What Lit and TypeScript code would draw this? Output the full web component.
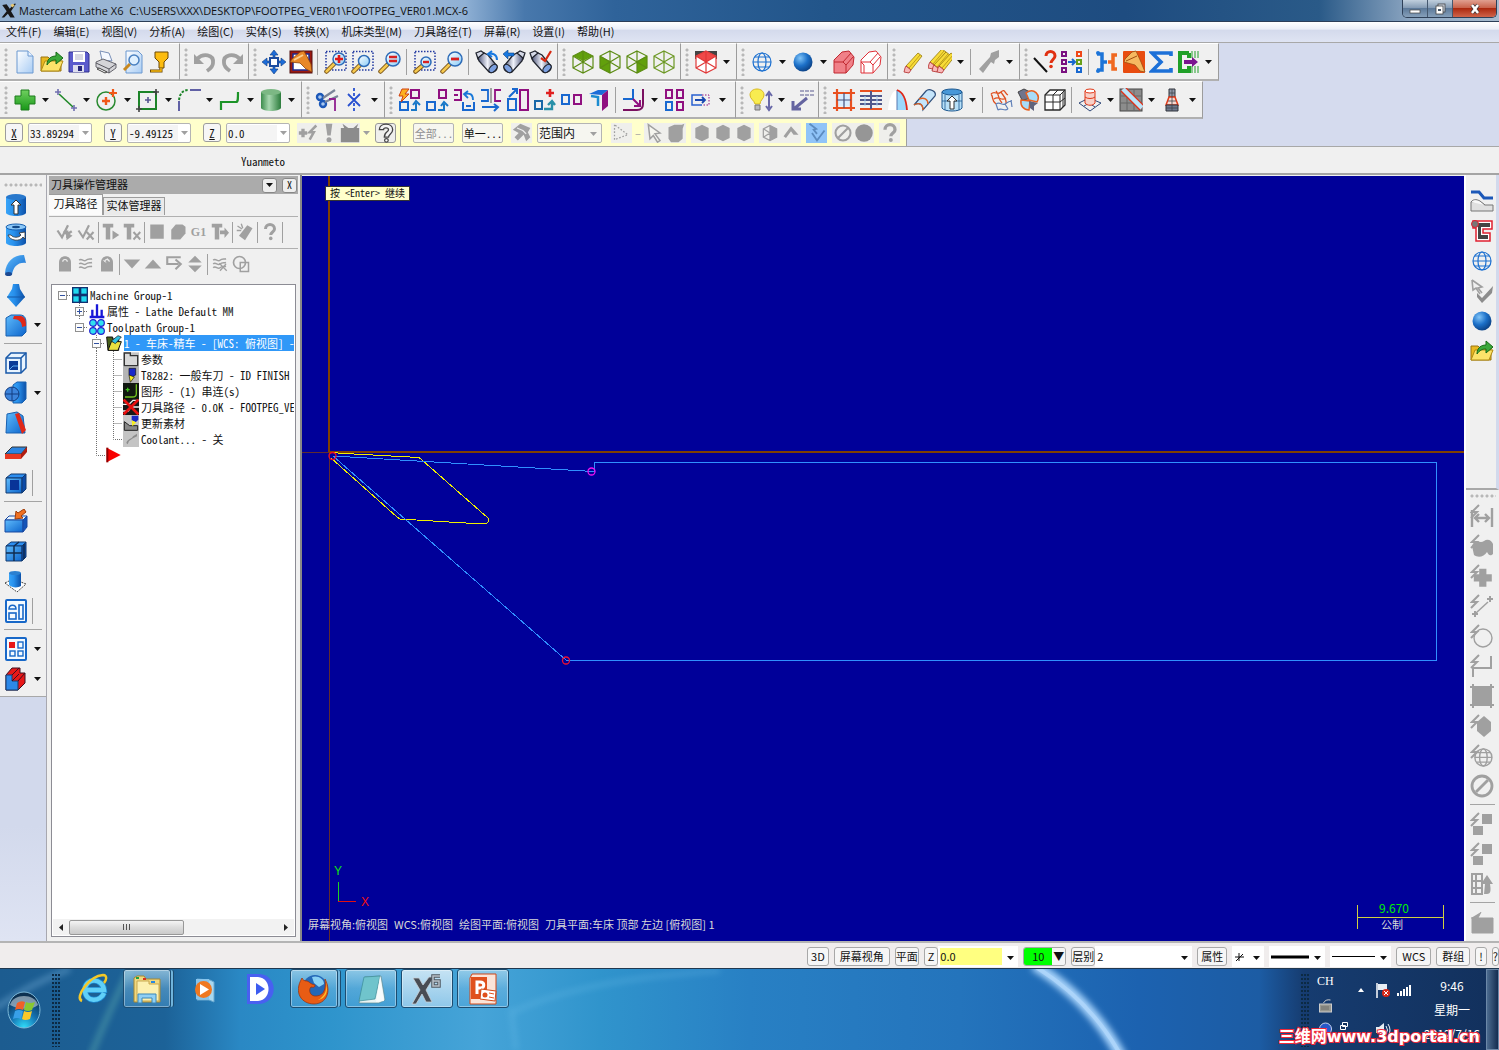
import { LitElement, html, css, svg, nothing } from "lit";
import { customElement, state } from "lit/decorators.js";
import { classMap } from "lit/directives/class-map.js";

const GREY = "#a0a0a0";

/* ---------- reusable icon parts ---------- */
const lens = (cx: number, cy: number, r: number) => svg`
  <path d="M2.500 21.500L${cx - r + 1} ${cy + r - 1}" stroke="#7a5418" stroke-width="4.500" stroke-linecap="round"/>
  <path d="M2.500 21.500L${cx - r + 1} ${cy + r - 1}" stroke="#f6c94e" stroke-width="2.500" stroke-linecap="round"/>
  <circle cx=${cx} cy=${cy} r=${r} fill="url(#gLens)" stroke="#2e6cb8" stroke-width="1.500"/>`;
const marquee = svg`<path d="M2 1.500H22V20H2z" fill="none" stroke="#2038a0" stroke-width="1.500" stroke-dasharray="1.500 1.500"/>`;
const binocular = svg`
  <path d="M1 3l5-2 3 2-2 5-4 1z" fill="#d6dae8" stroke="#20242e" stroke-width="1.300"/>
  <path d="M3 8L9 3l4 2 9 11c1 4-4 8-8 6L4 11z" fill="url(#gSteel)" stroke="#20242e" stroke-width="1.300"/>
  <ellipse cx="18" cy="18.500" rx="5" ry="3" transform="rotate(-45 18 18.500)" fill="#7ca0e0" stroke="#20242e" stroke-width="1.200"/>`;
const binocularLeft = svg`<g transform="matrix(-1 0 0 1 24 0)">${binocular}</g>`;
const cubeWire = (c: string) => svg`
  <path d="M12 1L22 6V18L12 23L2 18V6zM12 1V23M2 6L22 18M22 6L2 18" fill="none" stroke=${c} stroke-width="1.200"/>`;
const globe = (c: string, w = 1.2) => svg`
  <circle cx="12" cy="12" r="9" fill="none" stroke=${c} stroke-width=${w}/>
  <ellipse cx="12" cy="12" rx="4" ry="9" fill="none" stroke=${c} stroke-width=${w}/>
  <path d="M3 12H21M4.500 7H19.500M4.500 17H19.500" stroke=${c} stroke-width=${w}/>`;
const bolt = (c = GREY) => svg`<path d="M9 1L2 8h5L1 14" fill="none" stroke=${c} stroke-width="2"/>`;
const sq = (x: number, y: number, w: number, h: number, c: string, s = 2) =>
  svg`<rect x=${x} y=${y} width=${w} height=${h} fill="none" stroke=${c} stroke-width=${s}/>`;
const plus = (x: number, y: number, r: number, c: string, w = 1.6) =>
  svg`<path d="M${x - r} ${y}H${x + r}M${x} ${y - r}V${y + r}" stroke=${c} stroke-width=${w}/>`;
const pencil = (x: number, y: number) => svg`<g transform="translate(${x} ${y})">
  <path d="M3 15L15 2l4 3L8 19z" fill="#f8dc38" stroke="#94780c" stroke-width=".8"/><path d="M6 17L17 4" stroke="#b09010" stroke-width=".8"/>
  <path d="M3 15l5 4-2 3-5-1 1-4z" fill="#f8b8b8" stroke="#b02828" stroke-width=".8"/></g>`;
const blueBox = svg`<path d="M2 7l5-4h15l-4 4z" fill="#2d8ef0" stroke="#123a70"/><path d="M2 7H18V22H2z" fill="url(#gBlue)" stroke="#123a70"/><path d="M18 7l4-4V18l-4 4z" fill="#0b4aa8" stroke="#123a70"/>`;
const hexG = svg`<path d="M12 2L20 6V18L12 22L4 18V6z" fill=${GREY}/>`;
const folderArrow = svg`
  <path d="M1 7h7l2 2h11v12H1z" fill="#e8b820" stroke="#9a7410"/><path d="M1 21l4-10h18l-4 10z" fill="#fce36a" stroke="#b08a14"/>
  <path d="M7 15c0-7 5-9 9-9V2l7 6-7 6v-4c-4 0-6 1-9 5z" fill="#3aa83a" stroke="#176a17"/>`;
const cross = svg`<path d="M8 2h8v6h6v8h-6v6H8v-6H2V8h6z"/>`;
const ques = (c: string) => svg`<path d="M6 8c0-8 12-8 12 0 0 4-5 4-5 8" fill="none" stroke=${c} stroke-width="4"/><circle cx="13" cy="20.500" r="2.400" fill=${c}/>`;
const wavy = svg`<path d="M3 7c3-4 6 3 9 0s6-1 8-2M3 12c3-4 6 3 9 0s6-1 8-2M3 17c3-4 6 3 9 0s6-1 8-2" fill="none" stroke=${GREY} stroke-width="2"/>`;
const lock = svg`<path d="M4 10c0-11 16-11 16 0v12H4z" fill=${GREY}/><path d="M9 9c0-4 6-4 6 0" fill="none" stroke="#f0f0f0" stroke-width="1.500"/>`;

/* ---------- icon table, 24 x 24 grid ---------- */
const ICONS: Record<string, unknown> = {
  new: svg`<path d="M4 1H15L20 6V23H4z" fill="url(#gPaper)" stroke="#6a98d0"/><path d="M15 1V6H20" fill="#e8f2ff" stroke="#6a98d0"/>`,
  open: folderArrow,
  save: svg`<path d="M2 2H20L22 4V22H2z" fill="#5a5acc" stroke="#30308c"/><rect x="6" y="2" width="12" height="10" fill="#fff"/><path d="M8 5h8M8 7h8M8 9h8" stroke="#b0b0c8"/><rect x="6" y="15" width="11" height="7" fill="#dde"/><rect x="11" y="16" width="4" height="5" fill="#26267c"/>`,
  print: svg`<path d="M6 1l9 2 3 8-10-1z" fill="#f4f8ff" stroke="#7a90b8"/><path d="M2 12l7-3 13 5v4l-7 5L2 17z" fill="#d4d4d8" stroke="#66666e"/><path d="M2 13l13 6 7-5M15 19v4" fill="none" stroke="#55555d"/><path d="M5 18l8 4-2 1-8-4z" fill="#fff" stroke="#444"/>`,
  preview: svg`<path d="M5 1H17L21 5V23H5z" fill="url(#gPaper)" stroke="#6a98d0"/><path d="M3 20l6-6" stroke="#c88820" stroke-width="3"/><circle cx="13" cy="10" r="5" fill="#dff0ff" stroke="#4a80c0" stroke-width="1.500"/>`,
  verify: svg`<path d="M7 2H20V8L16 12V18H11V12L7 8z" fill="#fcbc10" stroke="#6a4808"/><path d="M13 18v3H2" fill="none" stroke="#6a4808" stroke-width="3"/><path d="M13 18v3H3" fill="none" stroke="#fcbc10" stroke-width="1.500"/>`,
  undo: svg`<path d="M4 9C10 3 21 4 20 13c0 4-3 6-6 8" fill="none" stroke=${GREY} stroke-width="3.800"/><path d="M1 4v10h10z" fill=${GREY}/>`,
  redo: svg`<path d="M20 9C14 3 3 4 4 13c0 4 3 6 6 8" fill="none" stroke=${GREY} stroke-width="3.800"/><path d="M23 4v10H13z" fill=${GREY}/>`,
  fit: svg`<path d="M12 0l4 5h-3v3h-2V5H8zM12 24l4-5h-3v-3h-2v3H8zM0 12l5-4v3h3v2H5v3zM24 12l-5-4v3h-3v2h3v3z" fill="#1c6cd8" stroke="#123c80" stroke-width=".6"/><rect x="8" y="8" width="8" height="8" fill="#fff" stroke="#1c4ca0" stroke-width="2"/>`,
  repaint: svg`<rect x="1" y="1" width="22" height="22" fill="#9c1810" stroke="#501010"/><rect x="4" y="4" width="16" height="16" fill="#fff" stroke="#1a2a90" stroke-width="1.500"/><path d="M11 2l4-1 7 13 1 8-6-3-6-6-10-1 2-3z" fill="#e88828" stroke="#8a4008" stroke-width=".8"/><path d="M5 10l9-5" stroke="#fcd090" stroke-width="2"/>`,
  zoomWin: svg`${marquee}${lens(15, 9, 6)}${plus(15, 9, 4, "#e01818", 2.6)}`,
  zoomTarget: svg`${marquee}${lens(13, 11, 5.5)}`,
  zoomEq: svg`${lens(15, 9, 7)}<path d="M11 7h8M11 11h8" stroke="#d82020" stroke-width="2.400"/>`,
  unzoomWin: svg`${marquee}${lens(13, 12, 5)}<path d="M10 12h6" stroke="#d82020" stroke-width="2.400"/>`,
  unzoom: svg`${lens(15, 9, 7)}<path d="M11 9h8" stroke="#d82020" stroke-width="2.800"/>`,
  binoA: svg`${binocular}<path d="M22 10C22 4 17 3 14 4M17 1l-4 3 4 3" fill="none" stroke="#1878e0" stroke-width="2"/>`,
  binoB: svg`${binocularLeft}<path d="M1 4l5-4v3h6v3H6v3z" fill="#1878e0" stroke="#0c4080" stroke-width=".6"/>`,
  binoC: svg`${binocular}<path d="M12 8l4 3 6-10" fill="none" stroke="#d82810" stroke-width="2.200"/>`,
  cubeTop: svg`<path d="M12 1L22 6L12 11L2 6z" fill="#62a00c"/>${cubeWire("#5c8c14")}`,
  cubeFront: svg`<path d="M2 6L12 11V23L2 18z" fill="#62a00c"/>${cubeWire("#5c8c14")}`,
  cubeSide: svg`<path d="M22 6L12 11V23L22 18z" fill="#62a00c"/>${cubeWire("#5c8c14")}`,
  cubeIso: cubeWire("#6c9824"),
  cubeRed: svg`<path d="M1 1h22v8H1z" fill="#444"/><path d="M12 1L22 6V18L12 23L2 18V6z" fill="#fff"/><path d="M12 1L22 6L12 12L2 6z" fill="#f04848"/>${cubeWire("#e03838")}`,
  globe: globe("#1c70d0"),
  ball: svg`<circle cx="12" cy="12" r="9.500" fill="url(#gBall)"/>`,
  solidPink: svg`<path d="M2 10l8-8 7-1 5 6-1 8-7 8H2z" fill="#f08088" stroke="#c02830"/><path d="M2 12h9l3 3v8M11 12l8-9M14 15l7-8" fill="none" stroke="#c02830"/>`,
  solidWire: svg`<path d="M2 10l8-8 7-1 5 6-1 8-7 8H2z" fill="#fff" stroke="#e03038"/><path d="M2 12h9l3 3v8M11 12l8-9M14 15l7-8M2 12l3 3v8" fill="none" stroke="#e03038"/>`,
  pencil: pencil(2, 1),
  pencils: svg`${pencil(-1, -3)}${pencil(3, 0)}${pencil(8, 1)}`,
  hammer: svg`<path d="M2 19L13 7l1-4 8-3v7l-4 3-1 4-3-2L6 23z" fill=${GREY}/>`,
  analyze: svg`<path d="M1 8L14 22" stroke="#111" stroke-width="2"/><path d="M13 6c0-6 9-6 9 0 0 3-4 4-4 7" fill="none" stroke="#e03010" stroke-width="3"/><circle cx="18" cy="16.500" r="1.800" fill="#e03010"/>`,
  grids: svg`${sq(2, 2, 4, 4, "#7a1080")}${sq(2, 10, 4, 4, "#7a1080")}${sq(2, 18, 4, 4, "#7a1080")}${sq(17, 2, 4, 4, "#f04818")}${sq(17, 10, 4, 4, "#68a018")}${sq(17, 18, 4, 4, "#1868d0")}<path d="M8 12h6M12 9l3 3-3 3" fill="none" stroke="#1868d0" stroke-width="2"/>`,
  link: svg`<path d="M2 4h5v16H2M7 12h5" fill="none" stroke="#1c74d8" stroke-width="3.500"/><circle cx="3" cy="3" r="2" fill="#1c74d8"/><circle cx="3" cy="21" r="2" fill="#1c74d8"/><path d="M22 5h-4v14h4M18 12h-5" fill="none" stroke="#f06820" stroke-width="3.500"/>`,
  brush: svg`<rect x="1" y="1" width="22" height="22" rx="1" fill="#e84c10"/><path d="M10 2l4-1 5 11 4 10-5-1-5-6-11-3 1-3z" fill="#f6b860" stroke="#a04c10" stroke-width=".8"/><path d="M4 11l11-5" stroke="#a04c10"/>`,
  sigma: svg`<path d="M22 6V3H3L12 12L3 21H22V18" fill="none" stroke="#1c70d8" stroke-width="3.600"/>`,
  outC: svg`<path d="M13 3H4V21H13V16" fill="none" stroke="#20a028" stroke-width="4"/><path d="M13 3v5" stroke="#20a028" stroke-width="4"/><path d="M16 1v7M19 1v7M22 1v7M16 16v7M19 16v7M22 16v7" stroke="#20a028"/><path d="M8 10h8V7l6 5-6 5v-3H8z" fill="#7a1490"/>`,

  point: svg`<g fill="url(#gGreen)" stroke="#1c7c1c">${cross}</g>`,
  line: svg`<path d="M5 6L19 19" stroke="#208828" stroke-width="1.600"/>${plus(4, 4, 3, "#7070b0")}${plus(20, 20, 3, "#7070b0")}`,
  circle: svg`<circle cx="11" cy="13" r="9" fill="none" stroke="#2a8a30" stroke-width="1.500"/>${plus(11, 13, 4, "#f05818", 2.4)}${plus(18, 5, 4, "#f05818", 2.2)}`,
  rect: svg`${sq(3, 4, 17, 17, "#1c8428", 2)}${plus(12, 12, 3, "#555590")}${plus(20, 4, 3, "#444")}${plus(3, 21, 3, "#444")}`,
  fillet: svg`<path d="M2 23V13" stroke="#30308c" stroke-width="1.500"/><path d="M2 12C3 5 6 2 12 2" fill="none" stroke="#1c8428" stroke-width="2" stroke-dasharray="2.500 1.500"/><path d="M13 2h11" stroke="#30308c" stroke-width="1.500"/>`,
  spline: svg`<path d="M3 22V14H18C20 14 20 12 20 4" fill="none" stroke="#1c9428" stroke-width="2.200"/>`,
  cylinder: svg`<path d="M2 4V20C4 24 20 24 22 20V4z" fill="url(#gCyl)"/><ellipse cx="12" cy="4" rx="10" ry="3" fill="#7cb884"/>`,
  trim: svg`<circle cx="5" cy="9" r="3" fill="#a8c8f0" stroke="#1c58b8" stroke-width="2.400"/><circle cx="8" cy="16" r="3" fill="#a8c8f0" stroke="#1c58b8" stroke-width="2.400"/><path d="M8 10L20 2M10 14l13-6" stroke="#7a8498" stroke-width="2.200"/><path d="M14 11h6v12" fill="none" stroke="#902090" stroke-width="1.800"/>`,
  breakX: svg`<path d="M12 0V24" stroke="#2850d0" stroke-width="1.800" stroke-dasharray="3 2"/><path d="M6 6L18 18M18 6L6 18" stroke="#2850d0" stroke-width="1.800"/>`,
  tDyn: svg`${sq(13, 2, 8, 8, "#901080")}${sq(2, 14, 8, 8, "#1868d0")}<path d="M4 1h7l-4 5h4L3 14l2-6H1z" fill="#fcb020" stroke="#d04010"/><path d="M13 22h5v-7M15 17l3-4 4 4" fill="none" stroke="#1878c8" stroke-width="2"/>`,
  tMove: svg`${sq(14, 2, 7, 8, "#901080")}${sq(2, 14, 8, 8, "#1868d0")}<path d="M13 22h6v-6M16 18l3-4 4 4" fill="none" stroke="#1878c8" stroke-width="2"/>`,
  tRot: svg`<path d="M2 2h7v10H2M2 7h4" fill="none" stroke="#901080" stroke-width="2"/><path d="M21 12C21 6 18 5 13 6M16 3l-4 3 4 4" fill="none" stroke="#1878d8" stroke-width="1.800"/><path d="M11 14v8h11v-8M14 18h5" fill="none" stroke="#1868d0" stroke-width="2"/>`,
  tMir: svg`<path d="M2 2h7v11H2" fill="none" stroke="#1868d0" stroke-width="1.800"/><path d="M12 0v15" stroke="#555"/><path d="M22 2h-6v11h6" fill="none" stroke="#901080" stroke-width="1.800"/><path d="M3 19h16M15 16l4 3-4 4" fill="none" stroke="#1868d0" stroke-width="2"/>`,
  tScale: svg`${sq(2, 11, 8, 11, "#1868d0")}${sq(14, 2, 8, 20, "#901080")}<path d="M3 9l7-7M6 1h5v5" fill="none" stroke="#1868d0" stroke-width="2"/>`,
  tOff: svg`${sq(2, 13, 7, 8, "#1868a8")}${plus(17, 5, 4, "#e02020", 2.6)}<path d="M11 21h8v-6M15 17l4-4 3 4" fill="none" stroke="#2890a8" stroke-width="2.400"/>`,
  tProj: svg`${sq(2, 7, 7, 9, "#1868d0")}${sq(14, 7, 7, 9, "#901080")}`,
  tDrag: svg`<path d="M2 6l9-4h10l-6 5z" fill="#1c6cd8"/><path d="M21 2v16l-6 5V7z" fill="#901080"/><path d="M4 8l7 1v9" fill="none" stroke="#1c8cd0" stroke-width="2.500"/>`,
  tStretch: svg`<path d="M1 11h10V1" fill="none" stroke="#1868d0" stroke-width="2"/><path d="M1 22h14c4 0 6-2 6-6V1" fill="none" stroke="#7a1060" stroke-width="2"/><path d="M11 11l7 7M18 12v6h-6" fill="none" stroke="#901080" stroke-width="2"/>`,
  tArray: svg`${sq(3, 2, 6, 8, "#901080")}${sq(14, 2, 6, 8, "#901080")}${sq(3, 14, 6, 8, "#1868d0")}${sq(14, 14, 6, 8, "#901080")}`,
  tBox: svg`<path d="M12 7H2V17H12" fill="none" stroke="#2860d0" stroke-width="1.500"/><path d="M12 7h7v10h-7" fill="none" stroke="#901080" stroke-dasharray="1.500 1.500"/><path d="M5 12h10M12 9l3 3-3 3" fill="none" stroke="#1848b0" stroke-width="1.800"/>`,
  bulb: svg`<path d="M6 16C5 12 1 11 1 7c0-8 14-8 14 0 0 4-4 5-4 9z" fill="#f8ec50" stroke="#d8b820"/><path d="M6 17h5v5H6z" fill="#b8b8c0" stroke="#777"/><path d="M20 6v14M17 8l3-4 3 4M17 18l3 4 3-4" fill="none" stroke="#6868a8" stroke-width="2"/>`,
  dims: svg`<path d="M10 3h14M10 7h14" stroke="#5a5a90" stroke-dasharray="4 1"/><path d="M17 10L5 20M3 13v8h8" fill="none" stroke="#6464a0" stroke-width="3"/>`,
  frame: svg`<path d="M5 6h14v12H5z" fill="#d8ecff"/><path d="M5 1v22M19 1v22M1 5h22M1 20h22" stroke="#e85020" stroke-width="2.200"/><path d="M12 5v15M5 12h14" stroke="#44507c" stroke-width="1.200"/>`,
  hatch: svg`<path d="M1 3h22M1 21h22" stroke="#e85020" stroke-width="2.200"/><path d="M1 8h22M1 12h22M1 16h22M12 3v18" stroke="#50588c" stroke-width="2"/><path d="M6 8v10M18 8v10" stroke="#a8d0f0"/>`,
  arch: svg`<path d="M2 22C3 10 6 3 11 2V22z" fill="#fff"/><path d="M11 2c6 2 9 8 10 20H11z" fill="#9cd8fc"/><path d="M11 2v20" stroke="#5878b0"/><path d="M11 2c6 2 9 8 10 20" fill="none" stroke="#e02818" stroke-width="1.800"/>`,
  tube: svg`<path d="M1 17L13 3c3-3 11 0 9 5L10 22C10 16 6 14 1 17z" fill="#c4e4fa" stroke="#30507c" stroke-width="1.200"/><path d="M1 17c5-3 9-1 9 5M6 11c5-2 9 0 9 5" fill="none" stroke="#e06020" stroke-width="1.400"/>`,
  cylUp: svg`<path d="M2 4V20C4 24 20 24 22 20V4z" fill="#b8e0f8" stroke="#1c5890"/><ellipse cx="12" cy="4" rx="10" ry="3" fill="#4898d8" stroke="#1c5890"/><path d="M5 7v15M19 7v15M2 13h20" stroke="#1c5890" stroke-width=".8"/><path d="M10 21v-8H7l5-5 5 5h-3v8z" fill="#fff" stroke="#333"/>`,
  surfA: svg`<path d="M2 6c4-4 6 2 10-2s4 2 7 3M2 6c3 4 0 6 5 10M12 4c2 4 6 6 5 12M5 11c5-4 7 3 12-1M7 3c4 5 1 6 6 12" fill="none" stroke="#e05020" stroke-width="1.300"/><path d="M7 16c4-3 6 2 9 0s4-3 7-3M9 22c4-3 6 2 10-1M7 16l2 6M16 16l3 5M22 12l1 7" fill="none" stroke="#6080b8" stroke-width="1.200"/>`,
  surfB: svg`<path d="M2 4l6-3 6 3-2 7-6 1z" fill="#70748c" stroke="#444"/><path d="M10 5c8-6 15 2 11 9l-8-2z" fill="#a8dcf8" stroke="#e86020" stroke-width="1.500"/><path d="M5 12c-1 6 3 10 8 10l1-9z" fill="#a8dcf8" stroke="#e86020" stroke-width="1.500"/><path d="M13 13l9 2-4 3v5l-4-3z" fill="#60647c"/>`,
  boxGrid: svg`<path d="M2 7l5-5h15v15l-5 5H2z" fill="#fff" stroke="#282828" stroke-width="1.300"/><path d="M2 7h15v15M17 7l5-5M10 7v15M2 14h15l5-4M10 7l5-5M20 4v15" fill="none" stroke="#282828"/>`,
  sphereNet: svg`<path d="M1 15l10-5 12 5-11 8z" fill="none" stroke="#304878"/><path d="M6 18l11-6M6 12l11 7" stroke="#304878"/><path d="M7 3V15C9 18 15 18 17 15V3" fill="#f8d0c8" stroke="#e03818"/><ellipse cx="12" cy="3" rx="5" ry="2" fill="#fff" stroke="#e03818"/><path d="M7 9c2 2 8 2 10 0" fill="none" stroke="#e03818"/>`,
  plate: svg`<rect x="1" y="1" width="22" height="22" fill="#8c8c8c" stroke="#444"/><path d="M8 1v22M15 1v22M1 8h22M1 15h22" stroke="#666"/><path d="M4 1l19 19" stroke="#e03018" stroke-width="7"/><path d="M4 1l19 19" stroke="#bce4f8" stroke-width="4.500"/>`,
  tower: svg`<path d="M9 1h6v8H9z" fill="#9098a8" stroke="#30343c"/><path d="M9 9h6l3 8H6z" fill="#f8d8d0" stroke="#e03818" stroke-width="1.500"/><path d="M6 17h12v6H6z" fill="#70788c" stroke="#30343c"/><path d="M12 1v22M9 5h6M6 20h12M8 13h8" stroke="#40444c" stroke-width=".8"/>`,

  gPlusBolt: svg`${plus(6, 12, 5, GREY, 4)}<path d="M22 3L14 11h5l-5 9" fill="none" stroke=${GREY} stroke-width="3"/>`,
  gBang: svg`<path d="M8 1h8l-2 14h-4z" fill=${GREY}/><circle cx="12" cy="20" r="3" fill=${GREY}/>`,
  gPot: svg`<path d="M1 6h4L3 1l7 5h6l6-5-2 5h3v17H1z" fill="#8c8c8c"/>`,
  help: svg`<path d="M4 8c0-9 16-9 16 0 0 5-5 5-5 9h-5c0-7 5-6 5-9 0-3-6-3-6 0z" fill="#f4f4f4" stroke="#444" stroke-width="1.600"/><circle cx="12.500" cy="20.800" r="2.200" fill="#fff" stroke="#444" stroke-width="1.500"/>`,
  gHelp: ques(GREY),
  gSurf: svg`<path d="M1 8l9-7 12 5-3 5 3 6-5 5-3-8-7 7-4-4 5-5z" fill=${GREY}/><path d="M6 6l7 3M13 9l4 4" stroke="#eee" stroke-width="1.500"/>`,
  gTri: svg`<path d="M3 2v18l16-6z" fill="none" stroke=${GREY} stroke-width="1.500" stroke-dasharray="2 2"/>`,
  gCursor: svg`<path d="M4 2l14 10-6 1 6 8-3 2-5-8-4 4z" fill="#f6f6f0" stroke=${GREY} stroke-width="1.800"/>`,
  gHexA: svg`<path d="M3 5l7-3h9l3-1-2 6v12l-5 4H6l-3-4z" fill=${GREY}/>`,
  gHex: hexG,
  gHalf: svg`<path d="M12 3L20 7V17L12 21L4 17V7zM12 3V21M4 7l8 5M4 17l8-5" fill="none" stroke=${GREY} stroke-width="1.500"/><path d="M12 3L20 7V17L12 21z" fill=${GREY}/>`,
  gUp: svg`<path d="M3 16L12 4L21 14H15L12 10L6 18z" fill=${GREY}/>`,
  gPick: svg`<path d="M3 1l8 6-3 1 4 5M6 12l6 9 9-12" fill="none" stroke="#5c8cc0" stroke-width="2.200"/>`,
  gNo: svg`<circle cx="12" cy="12" r="9" fill="none" stroke=${GREY} stroke-width="2.500"/><path d="M6 18L18 6" stroke=${GREY} stroke-width="2.500"/>`,
  gDisc: svg`<circle cx="12" cy="12" r="10.500" fill="#969696"/>`,

  vCylUp: svg`<path d="M2 4V20C4 24 20 24 22 20V4z" fill="url(#gBlueH)"/><ellipse cx="12" cy="4" rx="10" ry="3" fill="#2878cc"/><path d="M10 21v-9H7l5-5 5 5h-3v9z" fill="#fff" stroke="#333"/>`,
  vRev: svg`<path d="M2 4V20C4 24 20 24 22 20V4z" fill="url(#gBlueH)"/><ellipse cx="12" cy="4" rx="10" ry="3" fill="#8cc8f8" stroke="#1860b0"/><ellipse cx="12" cy="4" rx="4" ry="1.200" fill="#124888"/><path d="M4 12c2 6 12 7 15 2l2 2v-7l-6 1 2 2c-2 3-8 3-10 0z" fill="#fff" stroke="#333" stroke-width=".8"/>`,
  vSweep: svg`<path d="M1 20C2 9 9 2 20 2l2 8C14 9 9 14 8 22z" fill="url(#gBlue)"/><ellipse cx="4.500" cy="21" rx="3.500" ry="2" fill="#1c4890"/>`,
  vLoft: svg`<path d="M9 1h6l1 5 5 8-9 10-9-10 5-8z" fill="url(#gBlueH)"/><path d="M3 14h18" stroke="#1458a8"/>`,
  vFillet: svg`<path d="M2 5l5-3h9c5 0 6 4 6 8v9l-4 4H2z" fill="url(#gBlue)" stroke="#1860b0"/><path d="M10 3h7c4 1 5 4 5 10l-4 1c0-5-3-8-9-8z" fill="#e02818"/>`,
  vShell: svg`<path d="M2 7l5-5h15v15l-5 5H2z" fill="#e8f4ff" stroke="#1858a8" stroke-width="1.500"/><path d="M2 7h15v15M17 7l5-5" fill="none" stroke="#1858a8" stroke-width="1.500"/><rect x="5" y="10" width="9" height="9" fill="#0c3c98"/><path d="M5 19l4-4h5" stroke="#58a8f0" fill="none"/>`,
  vBool: svg`<path d="M9 4l4-3h9v17l-4 4H9z" fill="url(#gBlueH)" stroke="#1860b0"/><circle cx="8" cy="13" r="7" fill="#3c84dc" stroke="#123c80"/><path d="M8 6v14M1 13h14" stroke="#123c80"/>`,
  vDraft: svg`<path d="M3 3l10-2 6 4 2 17H2z" fill="url(#gBlue)" stroke="#1860b0"/><path d="M11 3l4-1 7 17-4 4z" fill="#e02818"/>`,
  vThick: svg`<path d="M1 13L8 6h15l-6 7z" fill="#2c84e0" stroke="#333"/><path d="M1 13h16v5H1z" fill="#e83820"/><path d="M17 13l6-7v5l-6 7z" fill="#b01c10"/>`,
  vBlock: svg`${blueBox}<rect x="6" y="9" width="9" height="10" fill="#083498"/>`,
  vImport: svg`<path d="M1 11l4-4h18l-4 4z" fill="#e8f4ff" stroke="#1848a0"/><path d="M1 11h18v12H1z" fill="url(#gBlue)" stroke="#1848a0"/><path d="M19 11l4-4v11l-4 5z" fill="#1454b8" stroke="#1848a0"/><path d="M20 0l2 3-5 4 2 2-8 1 1-8 2 2z" fill="#f07020" stroke="#a03c08"/>`,
  vQuad: svg`${blueBox}<path d="M10 7v15M2 14h16M10 7l5-4M20 5v15" stroke="#102c50" stroke-width="1.500"/>`,
  vLay: svg`<path d="M1 14l8-4 13 5-9 8z" fill="#fff" stroke="#444" stroke-dasharray="2 1"/><path d="M5 4v12c3 3 9 3 12 1V4z" fill="url(#gBlueH)"/><ellipse cx="11" cy="4" rx="6" ry="2" fill="#2c80d0"/>`,
  vDraw: svg`<rect x="2" y="1" width="20" height="22" rx="1" fill="#f4faff" stroke="#1868c8" stroke-width="2"/>${sq(5, 14, 7, 6, "#1868c8", 1.6)}${sq(15, 6, 4, 14, "#1868c8", 1.6)}<path d="M5 10c0-5 7-5 7 0z" fill="none" stroke="#1868c8" stroke-width="1.500"/>`,
  vGrid: svg`<rect x="2" y="1" width="20" height="22" rx="1" fill="#f4faff" stroke="#1868c8" stroke-width="2"/><rect x="5" y="5" width="6" height="6" fill="#e81818"/>${sq(14, 5, 5, 6, "#1868c8", 1.4)}${sq(6, 14, 5, 5, "#1868c8", 1.4)}${sq(14, 14, 5, 5, "#1868c8", 1.4)}`,
  vStep: svg`<path d="M2 8l6-7h8v5h5v10l-7 7H2z" fill="#e81818" stroke="#3c1020"/><path d="M2 8h6v6h6v9H2z" fill="#2c88e8" stroke="#123c70"/><path d="M8 8l7-7M8 14l7-7M14 14l7-8" stroke="#3c1020"/>`,

  rLathe: svg`<path d="M1 3h8l5 6h9" fill="none" stroke="#1c58b8" stroke-width="3"/><path d="M1 13l8-1 6 4h8v6H1z" fill="#e0e0e0" stroke="#777"/><path d="M1 13c3-4 7-2 9-1l5 4" fill="#f8f8f8" stroke="#777"/>`,
  rProf: svg`<path d="M3 2h19v8H13v4h7v8H6V9H3z" fill="#fff" stroke="#e02030" stroke-width="1.500"/><path d="M6 4h14v4H11v8h7v4H8V7H6z" fill="#444"/><circle cx="5" cy="5" r="3.500" fill="#777" stroke="#e02030"/>`,
  rCheck: svg`<path d="M2 1l10 7-4 1 4 5M2 1l1 10 3-2 4 6" fill="none" stroke=${GREY} stroke-width="1.600"/><path d="M7 14l5 5L23 7l-1 7-10 10-5-6z" fill="#8c8c8c"/>`,
  qDim: svg`${bolt()}<path d="M2 6v17M22 4v19M5 14h14M9 10l-4 4 4 4M15 10l4 4-4 4" fill="none" stroke=${GREY} stroke-width="2.400"/>`,
  qSurf: svg`${bolt()}<path d="M2 12c3-8 8-2 12-5s8 0 9 3v10c-3 3-5 0-6-2-3 5-9 6-13 3z" fill=${GREY}/>`,
  qPoint: svg`${bolt()}<g transform="translate(2 3) scale(.9)" fill=${GREY}>${cross}</g>`,
  qLine: svg`${bolt()}<path d="M6 19L18 8" stroke=${GREY} stroke-width="1.500"/>${plus(20, 5, 3, GREY, 2)}${plus(5, 20, 3, GREY, 2)}`,
  qCirc: svg`${bolt()}<circle cx="13" cy="14" r="9" fill="none" stroke=${GREY} stroke-width="1.400"/>`,
  qStep: svg`${bolt()}<path d="M3 23V14H21V2" fill="none" stroke=${GREY} stroke-width="2"/>`,
  qRect: svg`<path d="M3 3h18v18H3z" fill=${GREY}/><path d="M0 3h24M0 21h24M3 0v24M21 0v24" stroke=${GREY} stroke-width="2"/>`,
  qHex: svg`${bolt()}<path d="M14 2l7 6v9l-7 6-7-6V8z" fill=${GREY}/>`,
  qGlobe: svg`${bolt()}<g transform="translate(2 2) scale(.95)">${globe(GREY, 1.5)}</g>`,
  qNo: svg`<circle cx="12" cy="12" r="10" fill="none" stroke=${GREY} stroke-width="2.800"/><path d="M6 18L18 6" stroke=${GREY} stroke-width="2.800"/>`,
  qSq: svg`${bolt()}<rect x="12" y="2" width="10" height="10" fill=${GREY}/><rect x="3" y="14" width="10" height="9" fill=${GREY}/>`,
  qFilm: svg`<path d="M2 2h10v20H2zM2 9h10M2 16h10M6 2v20" fill="none" stroke=${GREY} stroke-width="2"/><path d="M14 22h3c4 0 4-4 3-10h3l-6-9-6 9h4" fill=${GREY}/>`,
  qFold: svg`<path d="M1 8h7l3-6M2 8h21v15H2z" fill=${GREY} stroke=${GREY}/>`,

  mCheckA: svg`<path d="M2 10l6 9L16 3M10 11l5 4 6-4M15 10v10" fill="none" stroke=${GREY} stroke-width="3"/><path d="M14 12v11l8-6z" fill=${GREY}/>`,
  mCheckX: svg`<path d="M2 10l6 9L16 3M13 12l9 10M22 12l-9 10" fill="none" stroke=${GREY} stroke-width="2.800"/>`,
  mTA: svg`<path d="M1 1h14v5h-4v16H5V6H1z" fill=${GREY}/><path d="M14 10v12l9-6z" fill=${GREY}/>`,
  mTX: svg`<path d="M1 1h14v5h-4v16H5V6H1z" fill=${GREY}/><path d="M14 12l9 10M23 12l-9 10" stroke=${GREY} stroke-width="2.600"/>`,
  mBox: svg`<path d="M3 2h18v19H3z" fill=${GREY}/>`,
  mPoly: svg`<path d="M3 9l6-7h9l4 3v9l-7 8H3z" fill=${GREY}/>`,
  mTR: svg`<path d="M1 1h14v5h-4v16H5V6H1zM12 10h6V6l6 7-6 7v-5h-6z" fill=${GREY}/>`,
  mSpark: svg`<path d="M2 4l6 4M7 1l2 6M1 10h6" stroke=${GREY} stroke-width="1.800"/><path d="M4 17L15 3l7 4-10 16z" fill=${GREY}/>`,
  mLock: lock,
  mWave: wavy,
  mLockW: svg`${lock}<path d="M7 7l4 3M12 4l2 4" stroke="#f0f0f0"/>`,
  mDown: svg`<path d="M1 6h22l-11 12z" fill=${GREY}/>`,
  mUp: svg`<path d="M1 18h22L12 6z" fill=${GREY}/>`,
  mTurn: svg`<path d="M21 3H3v9h15M14 6l7 6-7 7" fill="none" stroke=${GREY} stroke-width="2.800"/>`,
  mBoth: svg`<path d="M3 10h18L12 1zM3 14h18l-9 9z" fill=${GREY}/>`,
  mWaveX: svg`${wavy}<path d="M11 11l10 10M20 12L12 21" stroke=${GREY} stroke-width="1.800"/>`,
  mShapes: svg`<circle cx="10" cy="10" r="8" fill="none" stroke=${GREY} stroke-width="2.200"/><path d="M11 10h11v12H11z" fill="none" stroke=${GREY} stroke-width="2"/>`,

  xMachine: svg`${[[1, 1], [13, 1], [1, 13], [13, 13]].map(([x, y]) => svg`<rect x=${x} y=${y} width="10" height="10" fill="#20d8f0" stroke="#103070" stroke-width="2"/>`)}`,
  xProps: svg`<path d="M1 21h22M5 21V10M12 21V2M19 21V10" stroke="#1818d8" stroke-width="3.500"/>`,
  xGroup: svg`${[[6, 6], [18, 6], [6, 18], [18, 18]].map(([x, y]) => svg`<circle cx=${x} cy=${y} r="5" fill="#30e0f0" stroke="#2020d0" stroke-width="1.800"/>`)}`,
  xFolder: svg`<path d="M1 3h9v3h9v17H3z" fill="#486018" stroke="#111" stroke-width="1.500"/><path d="M3 23l5-13h15l-5 13z" fill="#e8e040" stroke="#111" stroke-width="1.500"/><path d="M8 9l10-8 5 2-9 10z" fill="#30c0e0" stroke="#111"/>`,
  xFold: svg`<path d="M0 2h24v22H0z" fill="#c4c4c4"/><path d="M2 3h9v4h11v15H2z" fill="#d8d8d8" stroke="#333" stroke-width="2"/>`,
  xTool: svg`<path d="M0 0h24v24H0z" fill="#b4b4b4"/><path d="M9 2h10v10l-5 3-5-3z" fill="#1828c8" stroke="#111"/><path d="M9 12l8 3-6 8z" fill="#f8f020" stroke="#111"/>`,
  xGeom: svg`<path d="M0 0h24v24H0z" fill="#101810"/><path d="M4 10h6M7 7v6" stroke="#40c020" stroke-width="2"/><path d="M20 2v14c0 4-2 5-6 5H3" fill="none" stroke="#70c020" stroke-width="2"/>`,
  xPath: svg`<path d="M0 0h24v24H0z" fill="#181818"/><path d="M0 8h9l6-6h9M0 18h8l4-6h12" stroke="#eee" stroke-width="2" fill="none"/><path d="M1 1l22 22M23 1L1 23" stroke="#e81010" stroke-width="4"/>`,
  xStock: svg`<path d="M0 0h24v24H0z" fill="#c8c8c8"/><path d="M2 10l8 6h12v7H2z" fill="#888" stroke="#222" stroke-width="1.500"/><path d="M13 1h10v6l-4 4-6-3z" fill="#1828c8"/><path d="M13 8l7 3-6 6z" fill="#f8f020"/>`,
  xCool: svg`<path d="M0 0h24v24H0z" fill="#c4c4c4"/><path d="M5 18c2-7 8-5 10-10l6-4v4l-6 3-6 4-2 5z" fill="#8c8c8c"/>`,
  xHere: svg`<path d="M1 1v22L22 12z" fill="#f80000"/><path d="M2 1v22" stroke="#900000" stroke-width="3"/>`,
};

const icon = (name: string) =>
  html`<svg class="ico" viewBox="0 0 24 24" fill="none" aria-hidden="true">${ICONS[name]}</svg>`;

/* "|" is a separator, "v" a drop-down arrow */
const ROW_ONE = [
  "new open save print preview verify",
  "undo redo",
  "fit repaint | zoomWin zoomTarget zoomEq | unzoomWin unzoom | binoA binoB binoC",
  "cubeTop cubeFront cubeSide cubeIso",
  "cubeRed v",
  "globe v ball v solidPink solidWire",
  "pencil pencils v | hammer v",
  "analyze grids | link brush sigma outC v",
];
const ROW_TWO = [
  "point v line v circle v rect v fillet v spline v cylinder v",
  "trim breakX v",
  "tDyn tMove tRot tMir tScale tOff tProj tDrag | tStretch v tArray tBox v",
  "bulb v dims",
  "frame hatch arch tube cylUp v | surfA surfB boxGrid | sphereNet v plate v tower v",
];
const MENUS = ["文件(F)", "编辑(E)", "视图(V)", "分析(A)", "绘图(C)", "实体(S)", "转换(X)", "机床类型(M)", "刀具路径(T)", "屏幕(R)", "设置(I)", "帮助(H)"];
const LEFT_BAR = [
  ["vCylUp", "vRev", "vSweep", "vLoft", "vFillet v"],
  ["vShell", "vBool v", "vDraft", "vThick", "vBlock |"],
  ["vImport", "vQuad", "vLay", "vDraw |"],
  ["vGrid v", "vStep v"],
];
const RIGHT_TOP = ["rLathe", "rProf", "globe", "rCheck", "ball", "open"];
const RIGHT_LOW = [
  ["qDim", "qSurf", "qPoint", "qLine", "qCirc", "qStep", "qRect", "qHex", "qGlobe", "qNo"],
  ["qSq", "qSq", "qFilm"],
  ["qFold"],
];
const MGR_ONE = "mCheckA mCheckX | mTA mTX | mBox mPoly G1 mTR | mSpark | gHelp";
const MGR_TWO = "mLock mWave mLockW | mDown mUp mTurn mBoth | mWaveX mShapes";

/* tree cells: "." empty, "i" rail, "t" branch, "l" last branch, "+" closed, "-" open, "=" open with rail below */
const TREE: { cells: string; icon: string; text: string; selected?: boolean }[] = [
  { cells: "-", icon: "xMachine", text: "Machine Group-1" },
  { cells: ".+", icon: "xProps", text: "属性 - Lathe Default MM" },
  { cells: ".-", icon: "xGroup", text: "Toolpath Group-1" },
  { cells: "..=", icon: "xFolder", text: "1 - 车床-精车 - [WCS: 俯视图] -", selected: true },
  { cells: "..it", icon: "xFold", text: "参数" },
  { cells: "..it", icon: "xTool", text: "T8282: 一般车刀 - ID FINISH M" },
  { cells: "..it", icon: "xGeom", text: "图形 - (1) 串连(s)" },
  { cells: "..it", icon: "xPath", text: "刀具路径 - 0.0K - FOOTPEG_VER" },
  { cells: "..it", icon: "xStock", text: "更新素材" },
  { cells: "..il", icon: "xCool", text: "Coolant... - 关" },
  { cells: "..l", icon: "xHere", text: "" },
];

@customElement("app-root")
export class AppRoot extends LitElement {
  @state() private tab = 0;

  static styles = css`
    :host {
      display: flex;
      flex-direction: column;
      height: 100vh;
      min-height: 900px;
      overflow: hidden;
      background: #f0f0f0;
      color: #111;
      font: 11px/16px "Noto Sans CJK SC", "Liberation Sans", sans-serif;
      --mono: "Noto Sans Mono CJK SC", "Liberation Mono", "Noto Sans CJK SC", monospace;
    }
    * { box-sizing: border-box; }
    button, input, select { font: inherit; color: inherit; margin: 0; padding: 0; border: 0; background: none; border-radius: 0; }
    button { display: flex; align-items: center; justify-content: center; flex: none; white-space: nowrap; }
    select { appearance: none; }
    a { color: inherit; text-decoration: none; }
    ul { list-style: none; margin: 0; padding: 0; }
    .defs { position: absolute; width: 0; height: 0; }
    .ico { width: 24px; height: 24px; display: block; flex: none; }

    .title {
      display: flex; flex: none; height: 22px; padding-left: 1px; align-items: center; gap: 3px; overflow: hidden;
      border-bottom: 1px solid #2c3e58;
      background: linear-gradient(90deg, #92b0d0 0, #a6bfdc 24%, #8fb0d4 31%, #4878ac 35%, #2f639a 41%, #22558a 55%, #1e4c80 75%, #2a5a88 88%, #8aa4c0 94%, #a8bccf 100%);
    }
    .title .ico { width: 15px; height: 15px; }
    .title h1 { margin: 0; flex: 1; font: 11px/20px "Open Sans", "Noto Sans", sans-serif; white-space: pre; }
    .winbtns { display: flex; height: 18px; align-self: flex-start; margin-right: 2px; border: 1px solid #2e4058; border-top: 0; border-radius: 0 0 5px 5px; overflow: hidden; }
    .winbtns button { width: 25px; background: linear-gradient(#c0cfdd, #8299b3 48%, #5d7a9a 50%, #86a0ba); border-right: 1px solid #45586f; }
    .winbtns .close { width: 43px; border: 0; background: linear-gradient(#e0a090, #c86048 48%, #ac2a10 50%, #d0644a); }
    .winbtns svg { width: 16px; height: 14px; }

    .menu { display: flex; flex: none; height: 21px; padding: 0 0 3px 6px; gap: 12px; align-items: center; background: linear-gradient(#fff, #eceff8 35%, #d4daec 42%, #dfe4f3); border-bottom: 1px solid #a8a8a8; }

    .row { display: flex; flex: none; height: 38px; background: #d5dbee; }
    .strip { display: flex; align-items: center; padding-right: 3px; background: #f0f0f0; border-top: 1px solid #fff; border-bottom: 2px solid #b0b0b0; border-right: 1px solid #9c9c9c; }
    .strip.wide { padding-right: 6px; }
    .grip { width: 11px; height: 28px; flex: none; background: radial-gradient(circle at 6px 2px, #b8b8b8 1px, transparent 2px) 0 0 / 11px 5px; }
    .tool { width: 27px; height: 34px; }
    .drop { width: 14px; height: 30px; }
    .drop svg { width: 7px; height: 4px; }
    .vsep { width: 8px; height: 26px; flex: none; background: linear-gradient(#a0a0a0, #a0a0a0) 3px 0 / 1px 100% no-repeat; }

    .row.fields { height: 28px; border-bottom: 1px solid #a8a8a8; }
    .sel { display: flex; align-items: center; background: #ffffcc; padding: 0 4px 0 5px; font-family: var(--mono); border-right: 1px solid #a0a0a0; }
    .sel + .sel { padding: 0 6px 0 12px; }
    .axis { width: 18px; height: 19px; border: 1px solid #9c9c9c; border-radius: 3px; background: #f6f6f6; text-decoration: underline; }
    .combo { display: flex; align-items: center; height: 20px; width: 64px; margin: 0 12px 0 5px; border: 1px solid #b4b4b4; border-radius: 2px; background: #fff; }
    .combo.last { margin-right: 7px; }
    .combo input { flex: 1; min-width: 0; height: 16px; padding-left: 1px; background: #f4f4f4; }
    .combo .drop { height: 16px; width: 12px; color: #a0a0a0; }
    .mini { width: 21px; height: 20px; background: #efefec; }
    .mini .ico { width: 20px; height: 20px; }
    .mini.on { background: #90c4f8; }
    .mini.raised { border: 1px solid #999; border-radius: 3px; margin-left: 3px; }
    .mini.apart { margin-left: 5px; }
    .pick { height: 20px; width: 41px; padding-left: 1px; margin-right: 8px; border: 1px solid #b4b4b4; border-radius: 2px; background: #f6f6f0; }
    .pick:disabled { color: #909090; opacity: 1; }
    .drop.small { width: 12px; color: #a0a0a0; }
    .range { position: relative; display: flex; margin: 0 4px 0 5px; }
    .range .pick { width: 65px; margin: 0; font-size: 12px; }
    .range svg { position: absolute; right: 5px; top: 9px; width: 7px; height: 4px; pointer-events: none; color: #a0a0a0; }

    .prompt { flex: none; height: 28px; padding: 6px 0 0 241px; border-bottom: 2px solid #a4a4a4; font: 11px/16px var(--mono); }

    .main { display: flex; flex: 1; min-height: 0; }
    .left { display: flex; flex-direction: column; width: 47px; flex: none; background: linear-gradient(#d2d9ec 85%, #dfe4f3); border-right: 1px solid #a8a8b0; }
    .vbar { background: #f0f0f0; padding: 7px 0 2px 4px; border-bottom: 1px solid #a8a8a8; }
    .dots { height: 8px; width: 38px; background: radial-gradient(circle at 2px 3px, #b8b8b8 1px, transparent 2px) 0 0 / 5px 8px; }
    .vrow { display: flex; align-items: center; height: 30px; }
    .vrow .tool { width: 24px; height: 28px; }
    .vrow .vsep { margin-left: 1px; }
    .vrow .drop { margin-left: 2px; }
    .hsep { height: 8px; margin-right: 4px; background: linear-gradient(#a4a4a4, #a4a4a4) 0 3px / 100% 1px no-repeat; }

    .mgr { display: flex; flex-direction: column; width: 255px; flex: none; padding: 1px 2px 4px 2px; border-right: 2px solid #888; }
    .mgr-head { display: flex; align-items: center; height: 18px; flex: none; padding: 0 1px 0 2px; background: #ababab; gap: 5px; }
    .mgr-head h2 { flex: 1; margin: 0; padding-bottom: 2px; font: 11px/16px var(--mono); }
    .mgr-head button { width: 15px; height: 15px; border: 1px solid #888; border-radius: 3px; background: #eee; font: 10px/10px var(--mono); }
    .mgr-head svg { width: 7px; height: 4px; }
    .tabs { display: flex; align-items: flex-end; height: 21px; flex: none; }
    .tabs button { height: 18px; width: 62px; padding-bottom: 3px; border: 1px solid #9c9c9c; border-bottom: 0; background: #eaeaea; }
    .tabs button.active { height: 21px; width: 54px; background: #fbfbfb; border-left: 0; padding-bottom: 4px; }
    .mgr-tools { display: flex; align-items: center; height: 31px; flex: none; padding-left: 5px; margin-top: 1px; border-top: 1px solid #b0b0b0; }
    .mgr-tools .tool { width: 21px; color: #a0a0a0; font: bold 12px "Liberation Serif", serif; }
    .mgr-tools .ico { width: 18px; height: 18px; }
    .mgr-tools .vsep { width: 4px; height: 21px; background-position: 2px 0; }
    .treebox { display: flex; flex-direction: column; flex: 1; min-height: 0; margin: 5px 2px 0 2px; padding: 2px 1px 1px; background: #fff; border: 1px solid #8c8c94; overflow: hidden; }
    .tree { flex: 1; font: 11px/16px var(--mono); overflow: hidden; }
    .tree li { display: flex; height: 16px; padding-left: 1px; white-space: pre; }
    .tree .cell { width: 17px; height: 16px; flex: none; }
    .tree .ico { width: 16px; height: 16px; margin: 0 2px 0 1px; }
    .tree .sel-row { color: #fff; background: #3098f8; flex: 1; overflow: hidden; }
    .hscroll { display: flex; align-items: center; height: 16px; flex: none; background: #f2f2f2; }
    .hscroll button { width: 16px; height: 16px; }
    .hscroll button svg { width: 4px; height: 7px; }
    .thumb { display: flex; gap: 2px; width: 115px; height: 15px; align-items: center; justify-content: center; border: 1px solid #989898; border-radius: 2px; background: linear-gradient(#f4f4f4, #dcdcdc 50%, #cacaca); }
    .thumb i { width: 1px; height: 6px; background: #555; }
    .push { flex: 1; }

    .view { position: relative; flex: 1; min-width: 0; background: #000099; margin-top: 1px; }
    .view > svg { position: absolute; inset: 0; width: 100%; height: 100%; font: 12px "Liberation Sans", sans-serif; }
    .crisp { shape-rendering: crispEdges; }
    .tip { position: absolute; left: 23px; top: 10px; padding: 0 4px 1px; border: 1px solid #333; background: #ffffcc; font: 10px/12px var(--mono); }
    .views { position: absolute; left: 6px; bottom: 9px; margin: 0; display: flex; gap: 6px; color: #d8d8d8; }
    .views span { white-space: pre; }
    .scale { position: absolute; right: 21px; bottom: 10px; width: 86px; text-align: center; color: #d8d8d8; line-height: 14px; padding-right: 16px; }
    .scale b { display: block; font-weight: normal; color: #00f000; font-size: 12px; padding: 0 0 2px 4px; }

    .right { display: flex; flex-direction: column; width: 35px; flex: none; border-left: 2px solid #fff; background: #f0f0f0; overflow: hidden; }
    .right .top { height: 315px; flex: none; padding: 11px 0 0 4px; border-right: 3px solid #d2d9ec; border-bottom: 2px solid #a8a8a8; }
    .right .low { padding: 3px 0 0 4px; overflow: hidden; flex: 1; }
    .right .tool { width: 24px; height: 30px; }
    .right .dots { width: 26px; }

    .status { display: flex; align-items: center; justify-content: flex-end; flex: none; height: 27px; padding-top: 1px; overflow: hidden; background: #f0eded; border-top: 2px solid #b4b4b4; gap: 5px; }
    .status button.st { height: 19px; padding: 0 3px; border: 1px solid #a8a8a8; border-radius: 3px; background: #f6f6f6; }
    .status button.roomy { padding: 0 5px; }
    .status button.tight { padding: 0; }
    .pair { display: flex; align-items: center; }
    .field { display: flex; align-items: center; height: 21px; background: #fff; padding-left: 2px; }
    .field input { height: 17px; width: 62px; background: #fff; }
    .field .drop { width: 16px; height: 20px; padding-top: 4px; }
    .field input.hot { background: #ffff80; }
    .field.level input { width: 79px; }
    .num { display: flex; border: 1px solid #a8a8a8; border-radius: 3px; height: 19px; overflow: hidden; }
    .num button:first-child { width: 28px; background: #00ff00; }
    .num button:last-child { width: 13px; background: #f4f4f4; }
    .ln { height: 10px; }

    .task {
      position: relative; display: flex; flex: none; height: 82px; overflow: hidden; border-top: 1px solid #203850; color: #fff;
      background: linear-gradient(90deg, #1c5c90 0, #1c6298 11%, #2a88c4 16%, #2e94cc 22%, #46a4d8 32%, #3094cc 40%, #2880c4 50%, #2474bc 64%, #1c62b0 76%, #1c5ca4 84%, #163c70 87%, #12305c 100%);
    }
    .task > .swoosh { position: absolute; inset: 0; width: 100%; height: 100%; }
    .orb { width: 48px; position: relative; }
    .orb svg { width: 34px; height: 38px; }
    .tgrip { width: 8px; margin: 5px 7px 3px 4px; flex: none; background: radial-gradient(circle at 1px 1px, #0c2a44 1px, transparent 1px) 0 0 / 3px 4px; position: relative; }
    .apps { display: flex; gap: 4px; flex: 1; position: relative; align-items: flex-start; }
    .apps button { width: 52px; height: 39px; border: 1px solid transparent; border-radius: 3px; }
    .apps button.run { border-color: #1c4c70; background: linear-gradient(#b4dcf0b0, #7cbce470 50%, #58a8dc60); box-shadow: inset 0 0 0 1px #ffffff60; }
    .apps button.front { background: linear-gradient(#d8ecf8e0, #a8d4f0c0); }
    .apps button.stack { box-shadow: inset 0 0 0 1px #ffffff60, 3px 0 0 -1px #70b4dc, 4px 0 0 -1px #1c4c70; width: 48px; margin-right: 3px; }
    .apps svg { width: 32px; height: 32px; }
    .tray { display: flex; position: relative; }
    .tray .tgrip { margin-right: 8px; margin-left: 0; }
    .ime { display: flex; flex-direction: column; gap: 9px; width: 33px; padding-top: 4px; font: 12px/16px "Liberation Serif", serif; }
    .ime svg { width: 15px; height: 15px; margin-left: 1px; }
    .ime div { display: flex; gap: 5px; align-items: flex-start; }
    .ime .over { width: 10px; height: 9px; }
    .sys { display: grid; grid-template-columns: 22px 22px 20px; width: 72px; padding-top: 12px; align-content: start; row-gap: 22px; justify-items: center; align-items: center; }
    .sys svg { width: 16px; height: 18px; }
    .clock { display: flex; flex-direction: column; width: 60px; align-items: center; padding-top: 5px; font-size: 12px; line-height: 24px; margin-right: 4px; white-space: nowrap; }
    .clock span { height: 24px; }
    .desk { width: 13px; border: 1px solid #6c88a8; background: linear-gradient(90deg, #4c6c90, #142c50); }
    .mark { position: absolute; right: 19px; bottom: 2px; font: bold 16px/22px "DejaVu Sans", "Noto Sans CJK SC", sans-serif; color: #fff; -webkit-text-stroke: 2px #f02838; paint-order: stroke fill; }
  `;

  private arrow() {
    return html`<svg viewBox="0 0 7 4" aria-hidden="true"><path d="M0 0H7L3.5 4z" fill="currentColor" /></svg>`;
  }

  private token(t: string) {
    if (t === "|") return html`<span class="vsep"></span>`;
    if (t === "v") return html`<button class="drop" aria-label="更多">${this.arrow()}</button>`;
    if (t === "G1") return html`<button class="tool">G1</button>`;
    return html`<button class="tool" aria-label=${t}>${icon(t)}</button>`;
  }

  private strips(groups: string[], wide: number) {
    return html`<div class="row" role="toolbar">
      ${groups.map((g, i) => html`<div class=${classMap({ strip: true, wide: i === wide })}>
        <span class="grip"></span>${g.split(" ").map((t) => this.token(t))}
      </div>`)}
    </div>`;
  }

  private axis(label: string, value: string, last = false) {
    return html`<button class="axis" aria-label="${label} 轴">${label}</button>
      <div class=${classMap({ combo: true, last })}><input aria-label=${label} .value=${value} /><button class="drop" aria-label="${label} 列表">${this.arrow()}</button></div>`;
  }

  private mini(name: string, extra = "") {
    return html`<button class="mini ${extra}" aria-label=${name}>${icon(name)}</button>`;
  }

  private cell(kind: string) {
    const d: Record<string, string> = { ".": "", i: "M8.500 0V16", t: "M8.500 0V16M8.500 8.500H17", l: "M8.500 0V8.500H17", "-": "M13 8.500H17", "+": "M8.500 0V4M8.500 13V16M13 8.500H17", "=": "M8.500 0V4M8.500 13V16M13 8.500H17" };
    const box = "+-=".includes(kind);
    return html`<svg class="cell" viewBox="0 0 17 16" fill="none" aria-hidden="true">
      <path d=${d[kind]} stroke="#707070" stroke-dasharray="1 1" />
      ${box ? svg`<rect x="4.500" y="4.500" width="8" height="8" fill="#fcfcfc" stroke="#909090"/><path d=${kind === "+" ? "M6 8.500H11M8.500 6V11" : "M6 8.500H11"} stroke="#3050a0"/>` : nothing}
    </svg>`;
  }

  private vgroup(groups: string[][]) {
    return groups.map((g, i) => html`${i ? html`<div class="hsep"></div>` : nothing}
      ${g.map((r) => html`<div class="vrow">${r.split(" ").map((t) => this.token(t))}</div>`)}`);
  }

  private drawing() {
    return html`<svg viewBox="0 0 1162 765" fill="none" role="img" aria-label="车床图形">
      <g class="crisp">
        <path d="M27 0V277" stroke="#804000" stroke-width="2" />
        <path d="M27.500 277V765M0 276.500H27" stroke="#602c30" />
        <path d="M27 276H1162" stroke="#804000" stroke-width="2" />
        <path d="M29 276.500L43 277.500L117 281.500L120 284L186 342Q188 346 184 347.500H172L98 343L95 341L29 282" stroke="#f0f000" />
        <path d="M31 280L283 295H292.500V286.500H1134.500V484.500H264.500L31 280" stroke="#3090ff" />
      </g>
      <circle cx="30.500" cy="280" r="3.500" stroke="#f01020" stroke-width="1.300" /><circle cx="264" cy="484.500" r="3.500" stroke="#f01030" stroke-width="1.300" /><circle cx="289.500" cy="295.500" r="3.500" stroke="#f010f0" stroke-width="1.300" />
      <path d="M36.500 706V725" stroke="#20d020" /><path d="M36 725.500H54" stroke="#e01010" />
      <text x="32" y="699" fill="#10e010">Y</text><text x="59" y="730" fill="#f01010">X</text>
      <path d="M1055.500 729V753M1141.500 729V753M1055 741.500H1142" stroke="#d0d040" />
    </svg>`;
  }

  render() {
    return html`
      <svg class="defs" aria-hidden="true"><defs>
        <linearGradient id="gPaper" x2="1" y2="1"><stop stop-color="#fff" /><stop offset="1" stop-color="#a8ccf4" /></linearGradient>
        <linearGradient id="gLens" x2="1" y2="1"><stop stop-color="#fff" /><stop offset="1" stop-color="#88ccf8" /></linearGradient>
        <linearGradient id="gSteel" x2="1" y2="0"><stop stop-color="#50587c" /><stop offset=".5" stop-color="#f0f2fa" /><stop offset="1" stop-color="#485070" /></linearGradient>
        <linearGradient id="gGreen" x2="0" y2="1"><stop stop-color="#70d060" /><stop offset="1" stop-color="#189818" /></linearGradient>
        <linearGradient id="gCyl" x2="1" y2="0"><stop stop-color="#3c8c4c" /><stop offset=".4" stop-color="#a8d8b0" /><stop offset="1" stop-color="#2c7c3c" /></linearGradient>
        <linearGradient id="gBlue" x2="1" y2="1"><stop stop-color="#60bcfc" /><stop offset="1" stop-color="#0c64cc" /></linearGradient>
        <linearGradient id="gBlueH" x2="1" y2="0"><stop stop-color="#38a4f8" /><stop offset=".4" stop-color="#2890ec" /><stop offset="1" stop-color="#0c50a8" /></linearGradient>
        <radialGradient id="gBall" cx=".35" cy=".3" r=".8"><stop stop-color="#80c4f8" /><stop offset=".5" stop-color="#1c70c8" /><stop offset="1" stop-color="#083878" /></radialGradient>
        <radialGradient id="gOrb" cx=".5" cy="1" r=".9"><stop stop-color="#30e0fc" /><stop offset=".5" stop-color="#1470b0" /><stop offset="1" stop-color="#0c3050" /></radialGradient>
        <filter id="soft"><feGaussianBlur stdDeviation="3" /></filter>
      </defs></svg>

      <header class="title">
        <svg class="ico" viewBox="0 0 24 24" aria-hidden="true"><path d="M2 3L9 2L14 9L21 1H24L16 13L22 23H15L11 17L5 23H1L9 13z" fill="#181818" /><path d="M15 3l4-2 3 3-4 3z" fill="#e8c870" /></svg>
        <h1>Mastercam Lathe X6  C:\\USERS\\XXX\\DESKTOP\\FOOTPEG_VER01\\FOOTPEG_VER01.MCX-6</h1>
        <div class="winbtns">
          <button aria-label="最小化"><svg viewBox="0 0 16 14"><rect x="3" y="8" width="10" height="3" fill="#fff" stroke="#444" stroke-width=".7" /></svg></button>
          <button aria-label="还原"><svg viewBox="0 0 16 14"><rect x="6" y="2" width="7" height="8" fill="#ccd4e0" stroke="#444" stroke-width=".8" /><rect x="4" y="4" width="7" height="8" fill="#fff" stroke="#444" stroke-width=".8" /><rect x="6" y="7" width="3" height="2" fill="#456" /></svg></button>
          <button class="close" aria-label="关闭"><svg viewBox="0 0 16 14"><path d="M5 3l6 8M11 3L5 11" stroke="#433" stroke-width="4" /><path d="M5 3l6 8M11 3L5 11" stroke="#fff" stroke-width="2.500" /></svg></button>
        </div>
      </header>

      <nav class="menu">${MENUS.map((m) => html`<a href="#">${m}</a>`)}</nav>

      ${this.strips(ROW_ONE, 0)}
      ${this.strips(ROW_TWO, 2)}

      <div class="row fields">
        <div class="sel">
          ${this.axis("X", "33.89294")}${this.axis("Y", "-9.49125")}${this.axis("Z", "0.0", true)}
          ${this.mini("gPlusBolt")}${this.mini("gBang")}${this.mini("gPot")}
          <button class="drop small" aria-label="选项">${this.arrow()}</button>
          ${this.mini("help", "raised")}
        </div>
        <div class="sel">
          <button class="pick" disabled>全部...</button>
          <button class="pick">单一...</button>
          ${this.mini("gSurf")}
          <div class="range"><select class="pick" aria-label="选择范围"><option>范围内</option></select>${this.arrow()}</div>
          ${this.mini("gTri", "apart")}<button class="drop small" aria-label="选项">–</button>
          ${this.mini("gCursor")}${this.mini("gHexA")}
          ${this.mini("gHex", "apart")}${this.mini("gHex")}${this.mini("gHex")}
          ${this.mini("gHalf", "apart")}${this.mini("gUp")}
          ${this.mini("gPick", "on apart")}
          ${this.mini("gNo", "apart")}${this.mini("gDisc")}${this.mini("gHelp", "apart")}
        </div>
      </div>

      <div class="prompt">Yuanmeto</div>

      <div class="main">
        <aside class="left"><div class="vbar"><div class="dots"></div>${this.vgroup(LEFT_BAR)}</div></aside>

        <section class="mgr">
          <div class="mgr-head"><h2>刀具操作管理器</h2>
            <button aria-label="菜单">${this.arrow()}</button><button>X</button></div>
          <div class="tabs" role="tablist">
            ${["刀具路径", "实体管理器"].map((t, i) => html`<button role="tab" aria-selected=${this.tab === i} class=${classMap({ active: this.tab === i })} @click=${() => (this.tab = i)}>${t}</button>`)}
          </div>
          <div class="mgr-tools">${MGR_ONE.split(" ").map((t) => this.token(t))}<span class="vsep"></span></div>
          <div class="mgr-tools">${MGR_TWO.split(" ").map((t) => this.token(t))}</div>
          <div class="treebox">
            <ul class="tree" role="tree">
              ${TREE.map((r) => html`<li role="treeitem">${[...r.cells].map((c) => this.cell(c))}${icon(r.icon)}<span class=${r.selected ? "sel-row" : ""}>${r.text}</span></li>`)}
            </ul>
            <div class="hscroll">
              <button aria-label="向左"><svg viewBox="0 0 4 7"><path d="M4 0V7L0 3.5z" fill="#222" /></svg></button>
              <div class="thumb"><i></i><i></i><i></i></div><span class="push"></span>
              <button aria-label="向右"><svg viewBox="0 0 4 7"><path d="M0 0V7L4 3.5z" fill="#222" /></svg></button>
            </div>
          </div>
        </section>

        <main class="view">
          ${this.drawing()}
          <div class="tip">按 &lt;Enter&gt; 继续</div>
          <p class="views"><span>屏幕视角:俯视图</span><span>WCS:俯视图</span><span>绘图平面:俯视图</span><span>刀具平面:车床 顶部 左边 [俯视图] 1</span></p>
          <div class="scale"><b>9.670</b>公制</div>
        </main>

        <aside class="right">
          <div class="top">${RIGHT_TOP.map((t) => this.token(t))}</div>
          <div class="low"><div class="dots"></div>${this.vgroup(RIGHT_LOW)}</div>
        </aside>
      </div>

      <footer class="status">
        <button class="st">3D</button><button class="st roomy">屏幕视角</button><button class="st tight">平面</button>
        <div class="pair"><button class="st">Z</button><div class="field"><input class="hot" aria-label="Z 深度" .value=${"0.0"} /><button class="drop" aria-label="Z 列表">${this.arrow()}</button></div></div>
        <div class="num"><button>10</button><button aria-label="颜色">▼</button></div>
        <div class="pair"><button class="st tight">层别</button><div class="field level"><input aria-label="层别" .value=${"2"} /><button class="drop" aria-label="层别列表">${this.arrow()}</button></div></div>
        <button class="st">属性</button>
        <div class="field"><svg width="14" height="12" viewBox="0 0 14 12"><path d="M1 7H10M5 3V11M2 11L9 4" stroke="#111" /></svg><button class="drop" aria-label="点型">${this.arrow()}</button></div>
        <div class="field"><svg class="ln" width="38" viewBox="0 0 38 10"><path d="M0 6H38" stroke="#000" stroke-width="3" /></svg><button class="drop" aria-label="线宽">${this.arrow()}</button></div>
        <div class="field"><svg class="ln" width="43" viewBox="0 0 43 10"><path d="M0 5.500H43" stroke="#000" /></svg><button class="drop" aria-label="线型">${this.arrow()}</button></div>
        <button class="st roomy">WCS</button><button class="st roomy">群组</button><button class="st">!</button><button class="st tight">?</button>
      </footer>

      <footer class="task">
        <svg class="swoosh" viewBox="0 0 1499 82" preserveAspectRatio="none" fill="none" aria-hidden="true">
          <path d="M1034 -4Q1090 30 1122 90" stroke="#a8d4fc" stroke-width="11" filter="url(#soft)" />
          <path d="M1036 -2Q1090 32 1120 86" stroke="#b4d8fc" stroke-width="4" opacity=".7" />
          <path d="M90 90Q110 40 130 0" stroke="#78ccb8" stroke-width="5" opacity=".4" filter="url(#soft)" />
          <path d="M-5 40Q30 15 70 0" stroke="#7cb4dc" stroke-width="5" opacity=".5" filter="url(#soft)" />
          <path d="M510 45Q580 10 720 2M511 40L516 82" stroke="#7cc8f0" stroke-width="4" opacity=".3" filter="url(#soft)" />
        </svg>
        <button class="orb" aria-label="开始"><svg viewBox="0 0 34 38"><ellipse cx="17" cy="19" rx="16" ry="18" fill="url(#gOrb)" stroke="#7cb8d8" /><path d="M3 14C6 2 28 2 31 14C24 20 10 18 3 14z" fill="#c8d4dc" opacity=".6" />
          <path d="M10 12q4-3 8-1l-2 8q-4-2-8 0z" fill="#f06028" /><path d="M19 11q4 2 9 0l-3 8q-4 2-8 0z" fill="#88c830" /><path d="M8 20q4-2 8 0l-2 8q-4-2-8 0z" fill="#38a0e8" /><path d="M17 20q4 2 8 0l-2 8q-5 2-8 0z" fill="#fcc828" /></svg></button>
        <span class="tgrip"></span>
        <div class="apps">
          <button aria-label="Internet Explorer"><svg viewBox="0 0 32 32" fill="none"><path d="M27 20C24 29 8 30 8 17S26 5 27 17H10" stroke="#1c88d0" stroke-width="6" /><path d="M27 20C24 29 8 30 8 17S26 5 27 17H10" stroke="#60d0f8" stroke-width="4.500" /><path d="M5 28C-3 25 12 3 26 2c5 0 3 6 1 8" stroke="#f4c828" stroke-width="2.500" /></svg></button>
          <button class="run stack" aria-label="资源管理器"><svg viewBox="0 0 32 32"><path d="M3 5l3-2h7l2 3h14v23H3z" fill="#f0d880" stroke="#a88830" /><path d="M6 8h12v3h10v17H6z" fill="#fcf0b0" stroke="#c8a850" /><path d="M5 4h3v2H5z" fill="#20a040" /><path d="M12 5h3v2h-3z" fill="#d83020" /><path d="M20 8h4v2h-4z" fill="#2888e0" /><path d="M7 30v-9h18v9h-4v-5H11v5z" fill="#90d0f4" stroke="#3c88b8" /></svg></button>
          <button aria-label="媒体播放器"><svg viewBox="0 0 32 32"><path d="M9 6l13 1 4 2v20l-5-2H9z" fill="#a8d8f0" stroke="#68a8d0" /><path d="M8 6h13v20H8z" fill="#88c4ec" /><circle cx="15.500" cy="16.500" r="8.500" fill="#f07820" /><path d="M12 11v11l9-5.500z" fill="#fff" /></svg></button>
          <button aria-label="播放器"><svg viewBox="0 0 32 32"><path d="M3 1H14C35 1 35 31 14 31H3z" fill="#4860f0" /><path d="M6 4H14C28 5 28 27 14 28H6z" fill="#fff" /><path d="M12 10v12l9-6z" fill="#3c5cf0" /></svg></button>
          <button class="run stack" aria-label="Firefox"><svg viewBox="0 0 32 32"><circle cx="17" cy="14" r="12" fill="#2468b8" /><path d="M14 4c6-2 12 2 12 7l-5 3-5-4z" fill="#88d0f4" /><path d="M4 5c-9 15 0 26 12 26S34 19 27 6c1 8 0 16-8 17-7 1-9-6-6-9 4 1 4-1 4-2-5-1-5-3-8-4-3 0-4-1-5-3z" fill="#e85c14" stroke="#982c08" stroke-width=".7" /><path d="M27 6c4 10-1 18-7 21 7-1 12-8 7-21z" fill="#fcc428" /></svg></button>
          <button class="run" aria-label="记事本"><svg viewBox="0 0 32 32"><path d="M10 4l16-1 4 24-6 3H4z" fill="#e8f4f4" stroke="#5c8890" stroke-width=".7" /><path d="M9 4l16-1-5 23-16 2z" fill="#70c4cc" stroke="#3c8c98" stroke-width=".7" /><path d="M25 3l4 25-8 1z" fill="#f8fcfc" /></svg></button>
          <button class="run front" aria-label="Mastercam X6"><svg viewBox="0 0 32 32"><path d="M2 5h6l4 7 6-8h5l-8 13 6 12h-6l-4-8-6 10H1l8-14z" fill="#484c54" stroke="#c8d0d8" stroke-width=".8" /><path d="M29 3h-7v10h6V8h-6" fill="none" stroke="#505860" stroke-width="3.500" /><path d="M29 3h-7v10h6V8h-6" fill="none" stroke="#b8c0c8" stroke-width="1.500" /></svg></button>
          <button class="run" aria-label="PowerPoint"><svg viewBox="0 0 32 32"><path d="M5 1h24v30H3V5z" fill="#fbe4d8" stroke="#d04818" /><path d="M4 4h16v22H4z" fill="#e0501c" /><path d="M10 21V9h3c5 0 5 6 0 6h-3" fill="none" stroke="#fff" stroke-width="3" /><path d="M14 16l15 2-1 10-15-2z" fill="#fff" stroke="#d04818" /><circle cx="18" cy="22" r="2.500" fill="#e0501c" /><path d="M22 20l5 1M22 24l5 1" stroke="#e0501c" /></svg></button>
        </div>
        <div class="tray">
          <span class="tgrip"></span>
          <div class="ime">CH
            <svg viewBox="0 0 14 15"><rect x="1" y="6" width="12" height="8" fill="#989890" stroke="#ccc" /><path d="M3 9h8M3 11h8" stroke="#444" stroke-dasharray="1 1" /><path d="M5 5q2-4 7-3" fill="none" stroke="#ccc" /></svg>
            <div><svg viewBox="0 0 14 15"><circle cx="7" cy="7" r="6" fill="#2858c8" stroke="#c8d4f0" /></svg><svg class="over" viewBox="0 0 10 9"><path d="M3.500 .5h5v4h-5zM1.500 3.500h5v4h-5z" fill="#12305c" stroke="#fff" /></svg></div>
          </div>
          <div class="sys">
            <svg viewBox="0 0 16 18"><path d="M5 11h6L8 7z" fill="#fff" /></svg>
            <svg viewBox="0 0 16 18"><path d="M2 2v15" stroke="#fff" stroke-width="1.500" /><path d="M3 3h9v6H3z" fill="#e8eef4" /><circle cx="11" cy="12" r="4" fill="#d82818" /><path d="M9 10l4 4M13 10l-4 4" stroke="#fff" /></svg>
            <svg viewBox="0 0 16 18"><path d="M2 15v-3M5 15v-5M8 15V8M11 15V6M14 15V4" stroke="#fff" stroke-width="2" /></svg>
            <span></span>
            <svg viewBox="0 0 16 18"><path d="M1 6h3l5-4v14l-5-4H1z" fill="#e8eef4" /><path d="M11 5q3 4 0 8M13 3q4 6 0 12" fill="none" stroke="#e8eef4" /></svg>
          </div>
          <div class="clock"><span>9:46</span><span>星期一</span><span>2012/7/16</span></div>
          <button class="desk" aria-label="显示桌面"></button>
        </div>
        <div class="mark">三维网www.3dportal.cn</div>
      </footer>
    `;
  }
}
